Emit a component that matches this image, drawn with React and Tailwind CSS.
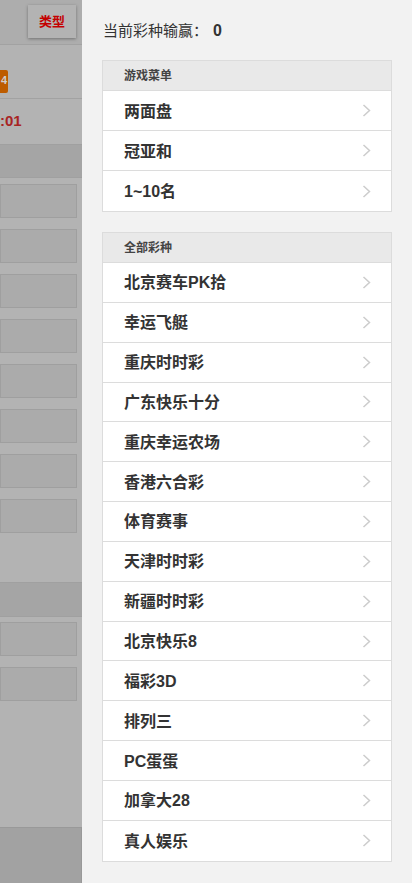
import React from "react";

const gameMenu = ["两面盘", "冠亚和", "1~10名"];

const lotteries = [
  "北京赛车PK拾",
  "幸运飞艇",
  "重庆时时彩",
  "广东快乐十分",
  "重庆幸运农场",
  "香港六合彩",
  "体育赛事",
  "天津时时彩",
  "新疆时时彩",
  "北京快乐8",
  "福彩3D",
  "排列三",
  "PC蛋蛋",
  "加拿大28",
  "真人娱乐",
];

const font = { fontFamily: '"Liberation Sans", "Noto Sans CJK SC", sans-serif' };

function Chevron() {
  return (
    <svg width="9" height="13" viewBox="0 0 9 13" className="shrink-0">
      <polyline points="1.5,1 7.5,6.5 1.5,12" fill="none" stroke="#cccccc" strokeWidth="1.5" />
    </svg>
  );
}

function MenuCard({ title, items, rowH }) {
  return (
    <div className="border border-[#dcdcdc] bg-white">
      <div className="h-[30px] flex items-center pl-[21px] bg-[#e9e9e9] border-b border-[#dcdcdc] text-[12px] font-bold text-[#444]">
        {title}
      </div>
      {items.map((t, i) => (
        <div
          key={t}
          className={`${rowH} flex items-center justify-between pl-[21px] pr-[20px] ${i < items.length - 1 ? "border-b border-[#dcdcdc]" : ""}`}
        >
          <span className="text-[16px] font-bold text-[#333] pt-[2px]">{t}</span>
          <Chevron />
        </div>
      ))}
    </div>
  );
}

function Box() {
  return <div className="h-[34px] w-[77px] border border-[#9f9f9f] bg-[#ababab]" />;
}

// page behind the drawer, already dimmed by the mask
function BackPage() {
  return (
    <div className="w-[82px] shrink-0 overflow-hidden bg-[#b3b3b3] flex flex-col min-h-[883px]">
      <div className="h-[45px] bg-[#adadad] border-b border-[#a2a2a2] relative">
        <div className="absolute left-[28px] top-[5px] w-[48px] h-[33px] bg-[#b3b3b3] shadow-[0_1px_3px_rgba(0,0,0,0.35)] flex items-center justify-center text-[13px] font-bold text-[#c40000]">
          类型
        </div>
      </div>
      <div className="h-[54px] border-b border-[#a2a2a2] relative">
        <div className="absolute left-0 top-[25px] w-[8px] h-[23px] bg-[#bd5c00] rounded-r-[2px] overflow-hidden">
          <span className="absolute right-[1px] top-[5px] text-[11px] leading-none font-bold text-[#cfcfcf]">4</span>
        </div>
      </div>
      <div className="h-[45px] relative">
        <span className="absolute left-0 top-[14px] text-[15px] font-bold text-[#a82424] leading-none">:01</span>
      </div>
      <div className="h-[34px] bg-[#a5a5a5] border-y border-[#a0a0a0]" />
      <div className="flex flex-col gap-[11px] pt-[6px]">
        {Array.from({ length: 8 }).map((_, i) => (
          <Box key={i} />
        ))}
      </div>
      <div className="h-[35px] mt-[49px] bg-[#a5a5a5] border-y border-[#a0a0a0]" />
      <div className="flex flex-col gap-[11px] pt-[5px]">
        <Box />
        <Box />
      </div>
      <div className="flex-1" />
      <div className="h-[56px] bg-[#a2a2a2] border-t border-r border-[#999]" />
    </div>
  );
}

export default function App() {
  return (
    <div className="flex w-[412px] h-[883px] overflow-hidden" style={font}>
      <BackPage />
      <div className="flex-1 bg-[#f2f2f2] px-[20px] pt-[21px]">
        <div className="pl-[1px] text-[15px] text-[#333] leading-[20px]">
          当前彩种输赢：<span className="ml-[5px] text-[16px] font-bold">0</span>
        </div>
        <div className="mt-[19px]">
          <MenuCard title="游戏菜单" items={gameMenu} rowH="h-[40px]" />
        </div>
        <div className="mt-[20px]">
          <MenuCard title="全部彩种" items={lotteries} rowH="h-[39.85px]" />
        </div>
      </div>
    </div>
  );
}
